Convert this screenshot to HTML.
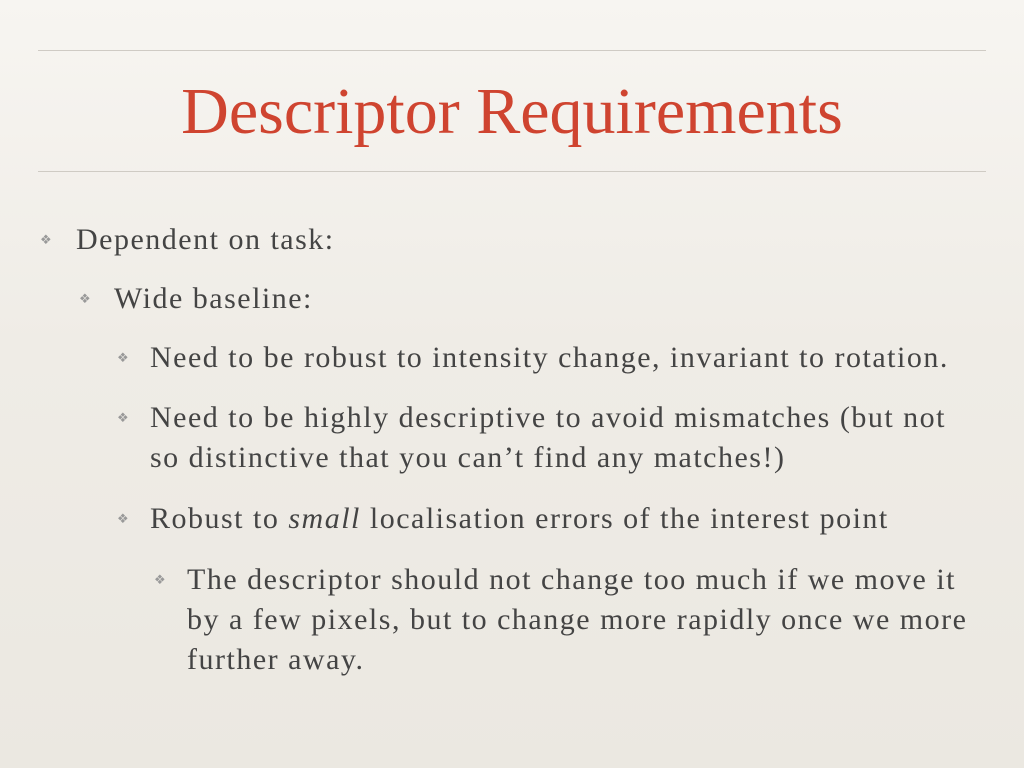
<!DOCTYPE html><html><head><style>
body{margin:0;width:1024px;height:768px;overflow:hidden;background:linear-gradient(180deg,#f7f5f1 0%,#efece6 45%,#ebe8e1 100%);font-family:"Liberation Serif",serif;color:#444}
.hr{position:absolute;left:38px;width:948px;height:1px;background:#cfcbc4}
.t{position:absolute;left:0;width:1024px;text-align:center;top:72px;font-size:66px;color:#cf4430;line-height:80px}
.l{position:absolute;font-size:30px;letter-spacing:1.5px;line-height:40px;white-space:nowrap}
.b{position:absolute;font-size:13px;color:#999;line-height:40px}
</style></head><body>
<div class="hr" style="top:50px"></div>
<div class="t">Descriptor Requirements</div>
<div class="hr" style="top:171px"></div>
<span class="b" style="left:40px;top:220px">❖</span><div class="l" style="left:76px;top:220px">Dependent on task:</div>
<span class="b" style="left:79px;top:279px">❖</span><div class="l" style="left:114px;top:279px">Wide baseline:</div>
<span class="b" style="left:117px;top:338px">❖</span><div class="l" style="left:150px;top:338px">Need to be robust to intensity change, invariant to rotation.</div>
<span class="b" style="left:117px;top:398px">❖</span><div class="l" style="left:150px;top:398px">Need to be highly descriptive to avoid mismatches (but not<br>so distinctive that you can’t find any matches!)</div>
<span class="b" style="left:117px;top:499px">❖</span><div class="l" style="left:150px;top:499px">Robust to <i>small</i> localisation errors of the interest point</div>
<span class="b" style="left:154px;top:560px">❖</span><div class="l" style="left:187px;top:560px">The descriptor should not change too much if we move it<br>by a few pixels, but to change more rapidly once we more<br>further away.</div>
</body></html>
